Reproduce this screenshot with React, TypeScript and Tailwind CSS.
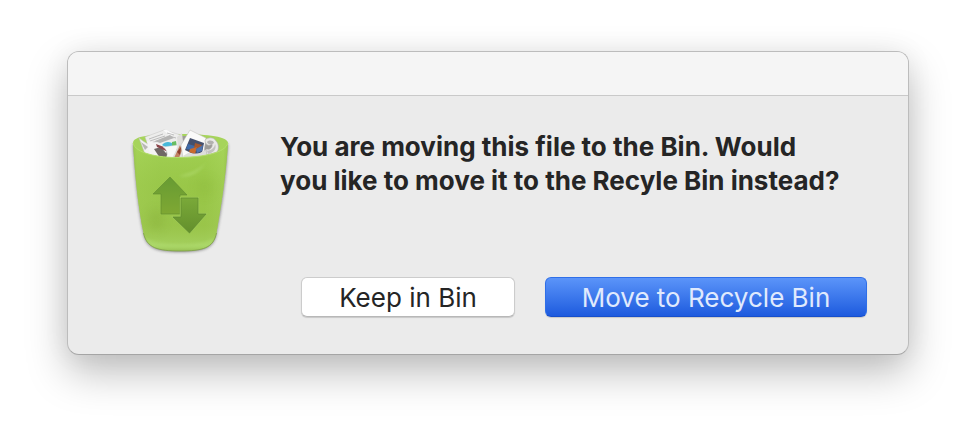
function BinIcon() {
  return (
    <svg viewBox="120 120 120 140" className="h-[140px] w-[120px] shrink-0" role="img" aria-label="Recycle Bin">
      <defs>
        <linearGradient id="side" x1="0" x2="1" y1="0" y2="0">
          <stop offset="0" stopColor="#8ab446" />
          <stop offset="0.05" stopColor="#a3cf56" />
          <stop offset="0.3" stopColor="#9cc94e" />
          <stop offset="0.75" stopColor="#9bc94b" />
          <stop offset="0.94" stopColor="#a6d25a" />
          <stop offset="1" stopColor="#8bb547" />
        </linearGradient>
        <linearGradient id="shade" x1="0" x2="0" y1="0" y2="1">
          <stop offset="0" stopColor="#a8d85a" stopOpacity="0.6" />
          <stop offset="0.4" stopColor="#96c443" stopOpacity="0.4" />
          <stop offset="0.75" stopColor="#98c148" stopOpacity="0.5" />
          <stop offset="0.92" stopColor="#a6d162" stopOpacity="0.8" />
          <stop offset="1" stopColor="#8fb94c" />
        </linearGradient>
        <linearGradient id="upArrow" x1="0" x2="0" y1="0" y2="1">
          <stop offset="0" stopColor="#679b33" />
          <stop offset="1" stopColor="#7fa833" />
        </linearGradient>
        <linearGradient id="downArrow" x1="0" x2="0" y1="0" y2="1">
          <stop offset="0" stopColor="#7aa939" />
          <stop offset="1" stopColor="#638f2c" />
        </linearGradient>
        <filter id="soft" x="-20%" y="-20%" width="140%" height="140%">
          <feGaussianBlur stdDeviation="1.4" />
        </filter>
        <filter id="glow" x="-80%" y="-80%" width="260%" height="260%">
          <feGaussianBlur stdDeviation="5" />
        </filter>
        <clipPath id="binClip">
          <path d="M133 143C135 153 158 158 180 157.500C204 157 225 153 228 143C226 176 221 207 216.500 233C213.500 248 203 251 180 251C158 251 146.500 248 143.500 233C138 207 135 176 133 143Z" />
        </clipPath>
      </defs>
      <path d="M133 144C135 178 138 208 143.500 234C146.500 249 158 252 180 252C203 252 213.500 249 216.500 234C222 208 226 178 228 144Z" fill="#444" opacity="0.6" filter="url(#soft)" />
      <path d="M133 143C133 136 151 134 180 134C209 134 228 137 228 143C227 163 135 164 133 143Z" fill="#a6d45b" />
      <path d="M142 146L166 136H196L219 146L213 157H150Z" fill="#9c9b98" />
      {/* crumpled paper */}
      <path d="M145 137L164 130L181 135L182 149L150 151Z" fill="#ededec" stroke="#c4c4c3" strokeWidth=".5" />
      <path d="M163 130L167 130L174 134L170 136Z" fill="#fafafa" />
      <path d="M149 139L163 134M150 141L165 136M151 143L167 138M167 133L174 135M169 136L176 138" stroke="#b0b0b0" strokeWidth=".8" />
      <path d="M155 141L170 135L174 138L160 143Z" fill="#b4b4b3" />
      <path d="M139 138L143 141L151 146L152 156L145 154Z" fill="#f1f1f0" stroke="#c0bfbc" strokeWidth=".5" />
      <path d="M141 142L148 147L145 150Z" fill="#b8b7b4" />
      <path d="M147 141L157 143L168 146L165 157L150 155Z" fill="#f4f4f3" />
      <path d="M154 149L161 147L170 158H160Z" fill="#6f6865" />
      <path d="M156 144L164 147L171 149L166 151L157 147Z" fill="#8b4449" />
      <path d="M162 145C165 141 171 141 174 145L169 149Z" fill="#48b8d9" />
      <path d="M172 142L176 141L177 148L172 148Z" fill="#67bd62" />
      <path d="M163 147L178 145L174 158L166 158C169 153 166 149 163 147Z" fill="#f8f8f7" stroke="#d1d0ce" strokeWidth=".4" />
      <path d="M177 137L182 133L185 158H172L178 147Z" fill="#dedddb" />
      <path d="M180 145L182 150L179 158H174Z" fill="#c08061" />
      <path d="M177 152L181 147L180 155Z" fill="#8d3e2d" />
      <path d="M190 130L206 138L203 158H183L181 145Z" fill="#fafaf9" stroke="#bab9b7" strokeWidth=".5" />
      <path d="M190 138L204 143L202 153L193 154L185 150Z" fill="#45506d" />
      <path d="M188 144L195 146L193 150L186 149Z" fill="#3f6ba9" />
      <path d="M195 143L202 145L200 149L194 148Z" fill="#a5582e" />
      <path d="M190 149L197 147L195 154L189 152Z" fill="#c86a2e" />
      <path d="M196 149L203 145L202 151L197 153Z" fill="#5074ad" />
      <path d="M183 156L188 153L198 154L207 149L214 152L209 157H184Z" fill="#dededb" />
      <path d="M205 140C208 137 214 137 216 141C219 144 219 149 217 152L207 155L206 150C210 150 213 147 212 144C208 147 205 144 205 140Z" fill="#e9e9e7" stroke="#b4b2af" strokeWidth=".6" />
      <path d="M207 142C209 140 213 140 214 143C212 145 208 145 207 142Z" fill="#b2b1af" />
      <path d="M207 151C212 150 215 147 215 144C217 148 214 153 208 154Z" fill="#c3c2c0" />
      {/* translucent shell */}
      <g clipPath="url(#binClip)">
        <path d="M132 140H229V254H132Z" fill="url(#side)" />
        <path d="M130 140H231V254H130Z" fill="url(#shade)" />
        <ellipse cx="156" cy="220" rx="8" ry="11" fill="#7ea331" opacity=".25" filter="url(#glow)" />
        <ellipse cx="205" cy="187" rx="10" ry="10" fill="#82aa30" opacity=".15" filter="url(#glow)" />
        <path d="M144 236C152 247 208 247 216 236L210 249H149Z" fill="#b9e67b" opacity=".35" filter="url(#soft)" />
        <path d="M207 161Q199 172 178 176Q196 179 207 161Z" fill="#bee684" opacity=".45" filter="url(#soft)" />
      </g>
      <path d="M133 143C135 153 158 158 180 157.500C204 157 225 153 228 143" fill="none" stroke="#b3de6c" strokeWidth="1" />
      <path d="M143.500 233C146.500 248 158 251 180 251C203 251 213.500 248 216.500 233" fill="none" stroke="#7f9f49" strokeWidth=".8" />
      <path d="M170 177L187 195H180V214H161V194H153Z" fill="url(#upArrow)" stroke="#5f8b30" strokeWidth=".6" />
      <path d="M181 198H198V214H206L189.500 233L173 217H181Z" fill="none" stroke="#9bc750" strokeWidth="2.500" />
      <path d="M181 198H198V214H206L189.500 233L173 217H181Z" fill="url(#downArrow)" stroke="#5d8630" strokeWidth=".6" />
    </svg>
  );
}

export default function App() {
  return (
    <main className="bg-white px-[67px] pt-[51px] pb-[83px] font-['Inter',sans-serif] text-[#252525]">
      <section
        role="alertdialog"
        aria-labelledby="message"
        className="overflow-hidden rounded-xl border border-[#bcbcbc] border-b-[#a5a5a5] bg-[#ebebeb] shadow-[0_18px_40px_rgba(0,0,0,0.25),0_0_28px_rgba(0,0,0,0.06)]"
      >
        <header className="h-11 border-b border-[#c9c9c9] bg-[#f5f5f5]" />
        <div className="flex gap-10 pt-6 pr-[41px] pb-[37px] pl-[52px]">
          <BinIcon />
          <div className="flex min-w-0 flex-1 flex-col">
            <h1 id="message" className="pt-2.5 text-[26px] leading-[34px] font-bold">
              You are moving this file to the Bin. Would
              <br />
              you like to move it to the Recyle Bin instead?
            </h1>
            <div className="mt-[79px] flex justify-end gap-[30px] text-[26px]">
              <button
                type="button"
                className="h-10 w-[214px] rounded-md border border-[#cccccc] border-b-[#b8b8b8] bg-white text-[#252525] shadow-[0_1px_1px_rgba(0,0,0,0.15)]"
              >
                Keep in Bin
              </button>
              <button
                type="button"
                className="h-10 w-[322px] rounded-md border border-[#2f6fe8] border-b-[#164ecb] bg-linear-to-b from-[#5b94f9] to-[#1d5ade] text-[#e0eafd] shadow-[0_1px_1px_rgba(0,0,0,0.15)]"
              >
                Move to Recycle Bin
              </button>
            </div>
          </div>
        </div>
      </section>
    </main>
  );
}
